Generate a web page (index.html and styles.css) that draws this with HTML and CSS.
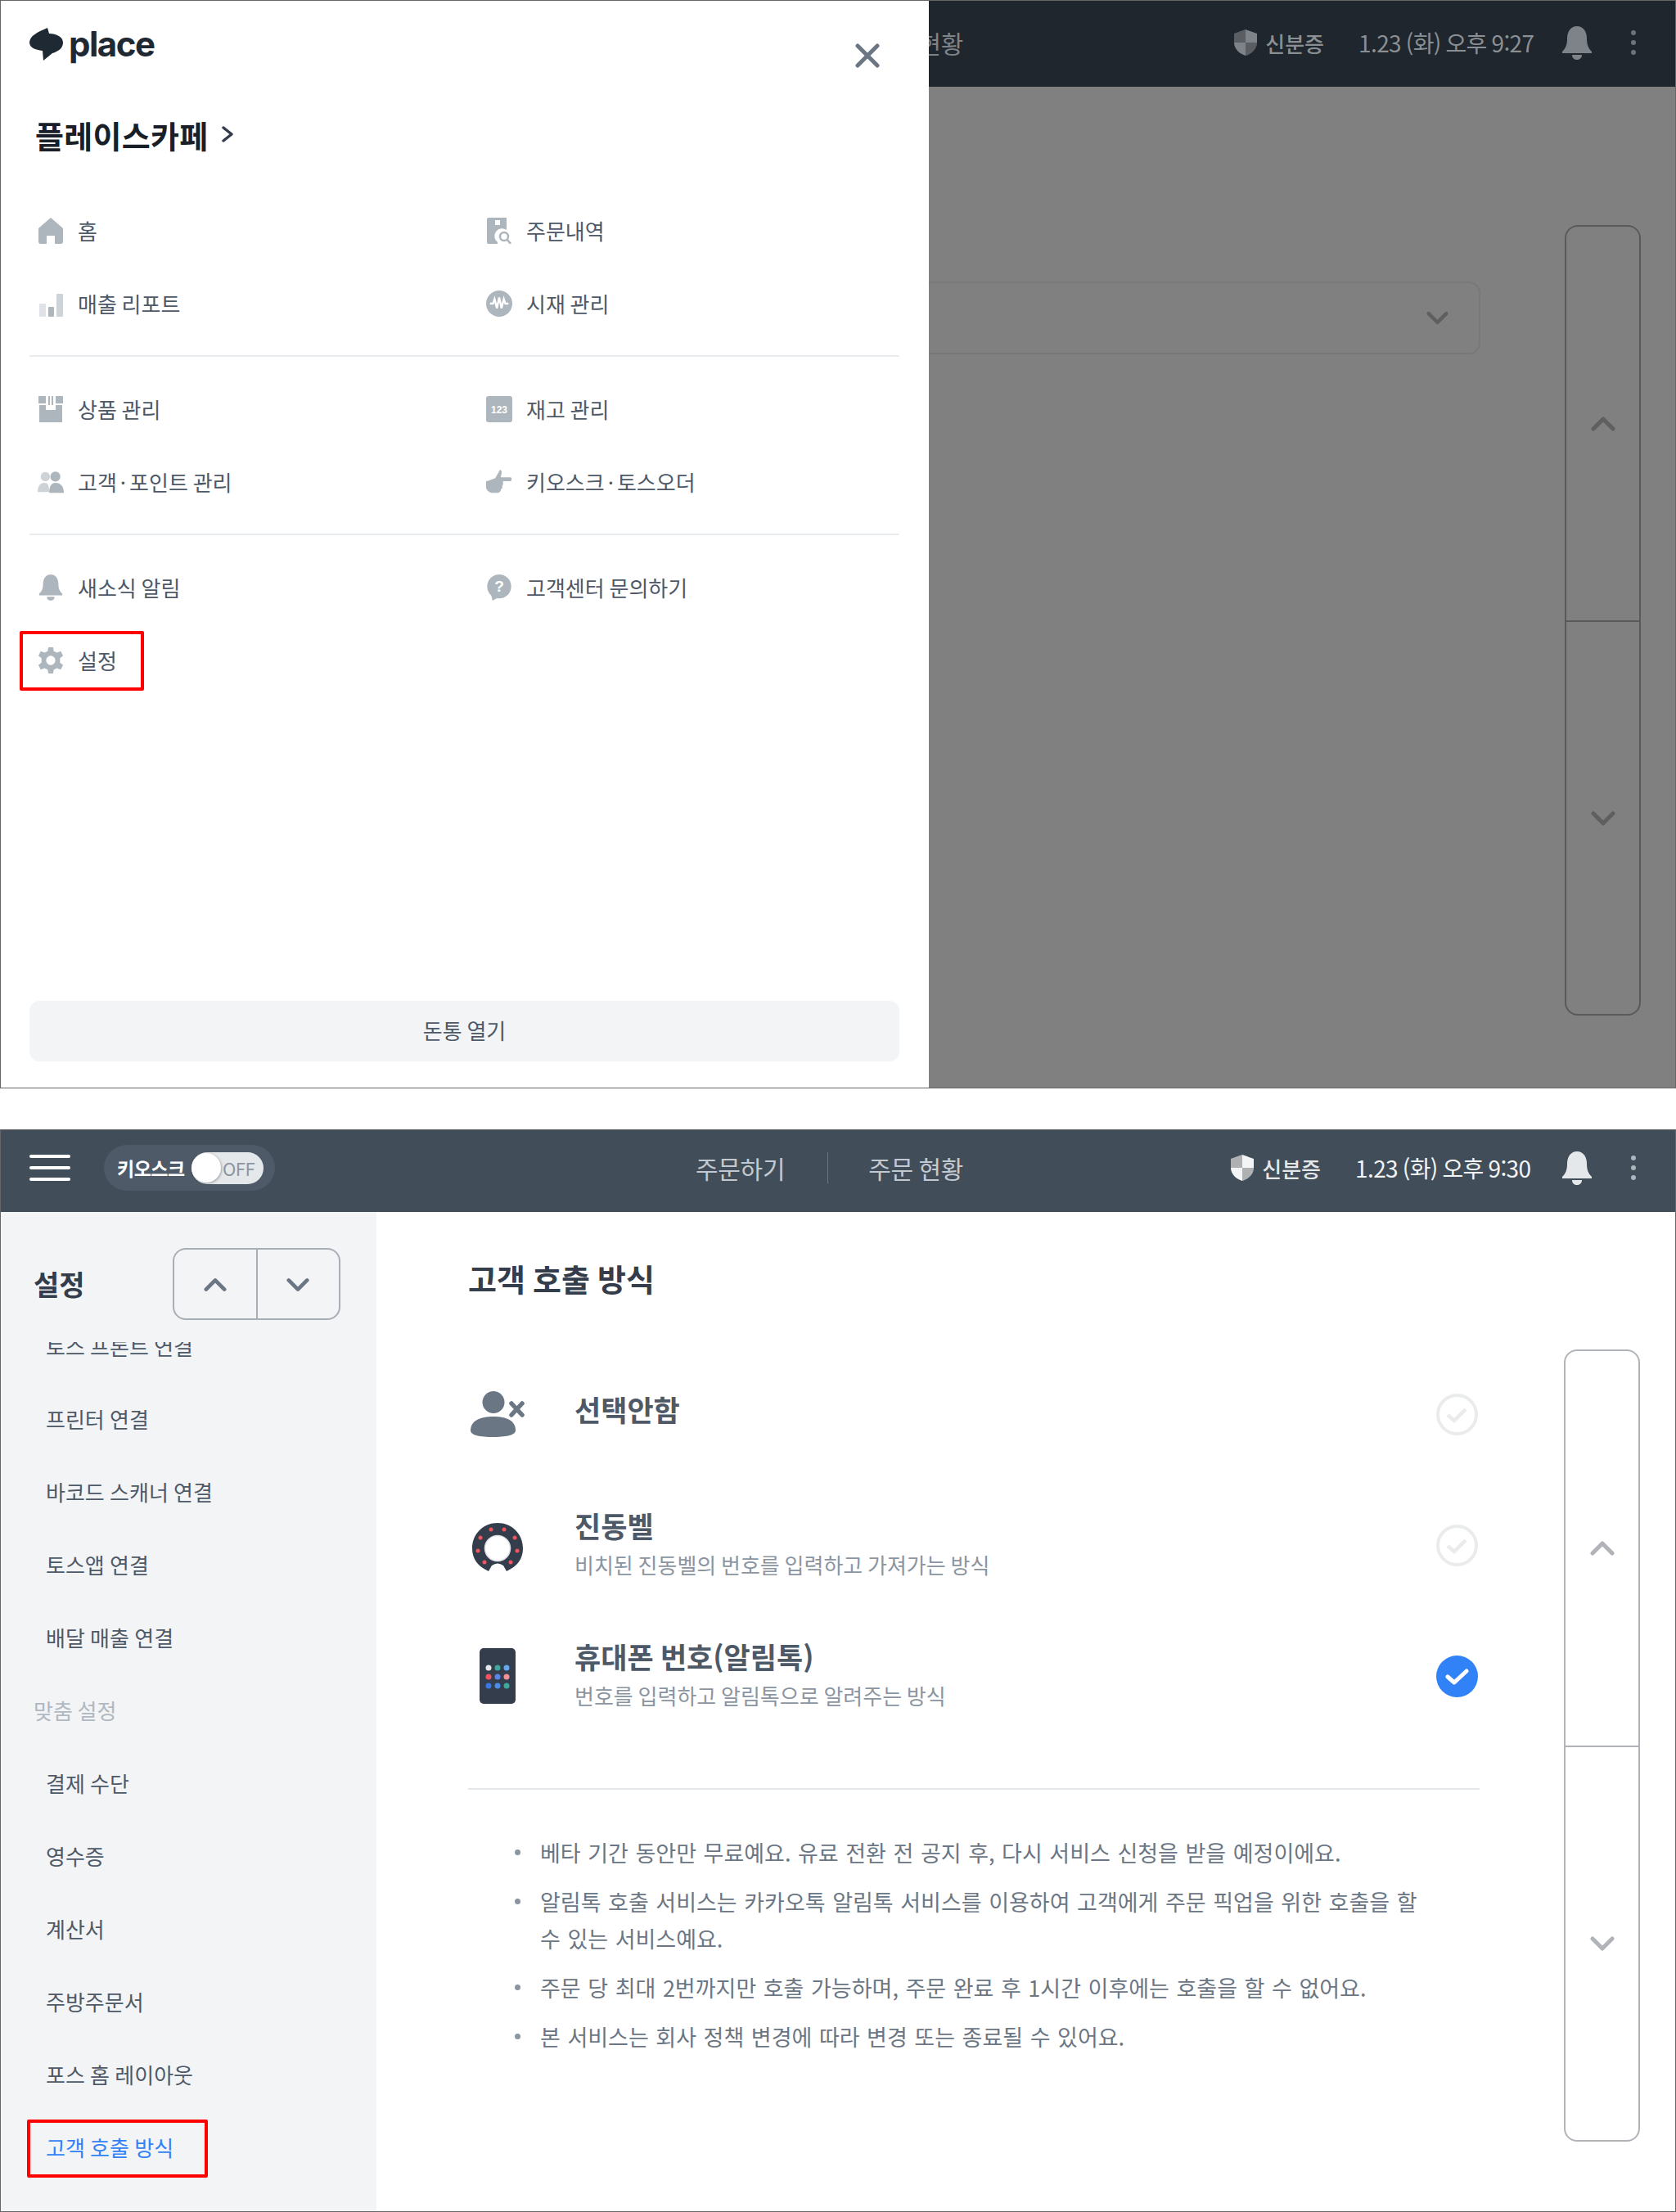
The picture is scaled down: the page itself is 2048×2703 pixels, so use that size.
FILE: index.html
```html
<!DOCTYPE html>
<html lang="ko">
<head>
    <meta charset="UTF-8">
    <meta name="viewport" content="width=device-width, initial-scale=1.0">
    <title>고객 호출 방식</title>
    <link rel="stylesheet" href="styles.css">
</head>
<body>
    <svg class="sprite" width="0" height="0">
        <symbol id="shield" viewBox="0 0 28 32"><path d="M14 0 L28 5 V16 C28 24 21 30 14 32 C7 30 0 24 0 16 V5 Z" fill="currentColor"/><path d="M14 0 V16 H0 V5 Z M14 16 H28 C28 24 21 30 14 32 Z" fill="#000" opacity=".28"/></symbol>
        <symbol id="bell" viewBox="0 0 36 41"><path d="M18 0 C26 0 30 7 30 15 C30 23 32 27 36 31 V33 H0 V31 C4 27 6 23 6 15 C6 7 10 0 18 0 Z M12 35 H24 C24 39 21 41 18 41 C15 41 12 39 12 35 Z" fill="currentColor"/></symbol>
        <symbol id="chev-up" viewBox="0 0 30 18"><path d="M3 15 L15 3 L27 15" fill="none" stroke="currentColor" stroke-width="5" stroke-linecap="round" stroke-linejoin="round"/></symbol>
        <symbol id="chev-down" viewBox="0 0 30 18"><path d="M3 3 L15 15 L27 3" fill="none" stroke="currentColor" stroke-width="5" stroke-linecap="round" stroke-linejoin="round"/></symbol>
    </svg>

    <section class="shot shot-dim">
        <header class="topbar">
            <div class="topbar-nav">
                <span class="nav-link">주문하기</span>
                <span class="nav-line"></span>
                <span class="nav-link">주문 현황</span>
            </div>
            <div class="topbar-right">
                <svg class="shield"><use href="#shield"/></svg>
                <span class="id-label">신분증</span>
                <span class="clock">1.23 (화) 오후 9:27</span>
                <svg class="bell"><use href="#bell"/></svg>
                <span class="dots"><i></i><i></i><i></i></span>
            </div>
        </header>
        <div class="dim-body">
            <div class="dim-select">
                <svg class="dim-chev"><use href="#chev-down"/></svg>
            </div>
            <div class="scroll-box">
                <div class="scroll-half"><svg class="scroll-chev"><use href="#chev-up"/></svg></div>
                <div class="scroll-half"><svg class="scroll-chev"><use href="#chev-down"/></svg></div>
            </div>
        </div>

        <aside class="drawer">
            <div class="drawer-head">
                <div class="logo">
                    <svg class="logo-mark" viewBox="0 0 42 40"><path d="M22 0 L24 7 C33 7 41 11 41 18 C41 25 35 29 28 31 L17 40 L16 28 C7 27 0 24 0 18 C0 10 10 5 22 0 Z" fill="#1f2933"/></svg>
                    <span class="logo-text">place</span>
                </div>
                <svg class="close" viewBox="0 0 30 30"><path d="M3 3 L27 27 M27 3 L3 27" stroke="#6b7684" stroke-width="5" stroke-linecap="round"/></svg>
            </div>
            <div class="store">플레이스카페
                <svg class="store-chev" viewBox="0 0 14 20"><path d="M2 2 L12 10 L2 18" fill="none" stroke="#333d4b" stroke-width="3.500" stroke-linecap="round" stroke-linejoin="round"/></svg>
            </div>

            <div class="menu-group">
                <div class="menu-item">
                    <svg class="menu-icon" viewBox="0 0 32 32"><path d="M16 0 L31 13 V29 Q31 32 28 32 H21 V22 H11 V32 H4 Q1 32 1 29 V13 Z"/></svg>
                    <span>홈</span>
                </div>
                <div class="menu-item">
                    <svg class="menu-icon" viewBox="0 0 32 32"><path d="M3 0 H25 V15 A9 9 0 0 0 14 30 V32 H3 Q1 32 1 30 V2 Q1 0 3 0 Z M11 3 V9 H17 V3 Z" fill-rule="evenodd"/><circle cx="22" cy="23" r="5" fill="none" stroke="#adb5bd" stroke-width="2.5"/><path d="M26 27 L30 32" stroke="#adb5bd" stroke-width="2.5"/></svg>
                    <span>주문내역</span>
                </div>
                <div class="menu-item">
                    <svg class="menu-icon" viewBox="0 0 32 32"><rect x="2" y="16" width="8" height="16" rx="1" fill="#dfe3e7"/><rect x="13" y="20" width="7" height="12" rx="1"/><rect x="23" y="4" width="8" height="28" rx="1" fill="#ced3d8"/></svg>
                    <span>매출 리포트</span>
                </div>
                <div class="menu-item">
                    <svg class="menu-icon" viewBox="0 0 34 34"><circle cx="17" cy="17" r="17"/><path d="M5 17 H9 L11 11 L14 23 L17 9 L20 23 L23 11 L25 17 H29" fill="none" stroke="#fff" stroke-width="2.5"/></svg>
                    <span>시재 관리</span>
                </div>
            </div>

            <div class="menu-group">
                <div class="menu-item">
                    <svg class="menu-icon" viewBox="0 0 32 32"><path d="M1 0 H10 V9 H1 Z M13 0 H15 V11 H13 Z M17 0 H19 V11 H17 Z M22 0 H31 V9 H22 Z" /><path d="M2 11 H10 V17 H22 V11 H30 V32 H2 Z"/></svg>
                    <span>상품 관리</span>
                </div>
                <div class="menu-item">
                    <svg class="menu-icon" viewBox="0 0 32 32"><rect width="32" height="32" rx="3"/><text class="icon-num" x="16" y="20.5" text-anchor="middle">123</text></svg>
                    <span>재고 관리</span>
                </div>
                <div class="menu-item">
                    <svg class="menu-icon" viewBox="0 0 34 28"><circle cx="10" cy="7" r="6" fill="#ced3d8"/><path d="M0 27 C0 18 4 15 9 15 C13 15 15 18 15 27 Z" fill="#ced3d8"/><circle cx="23" cy="7" r="6.5"/><path d="M15 28 C15 19 18 15 23 15 C30 15 34 20 34 28 Z"/></svg>
                    <span>고객<span class="mid-dot">·</span>포인트 관리</span>
                </div>
                <div class="menu-item">
                    <svg class="menu-icon" viewBox="0 0 34 32"><path d="M12 11 L18 0 Q21 1 20 5 L19 10 H32 Q34 11 33 13 Q33 15 31 15 H22 V18 Q22 20 21 21 V24 Q19 25 19 27 Q18 30 15 30 H7 Q2 29 0 24 V15 Q5 14 12 11 Z"/></svg>
                    <span>키오스크<span class="mid-dot">·</span>토스오더</span>
                </div>
            </div>

            <div class="menu-group menu-group-last">
                <div class="menu-item">
                    <svg class="menu-icon" viewBox="0 0 30 34"><path d="M15 0 C22 0 25 6 25 13 C25 19 27 22 30 25 V27 H0 V25 C3 22 5 19 5 13 C5 6 8 0 15 0 Z"/><path d="M10 29 H20 C20 32 18 34 15 34 C12 34 10 32 10 29 Z"/></svg>
                    <span>새소식 알림</span>
                </div>
                <div class="menu-item">
                    <svg class="menu-icon" viewBox="0 0 34 35"><circle cx="17" cy="16" r="16"/><path d="M6 26 L8 35 L17 30 Z"/><text class="icon-q" x="17" y="23" text-anchor="middle">?</text></svg>
                    <span>고객센터 문의하기</span>
                </div>
                <div class="menu-item menu-item-marked">
                    <svg class="menu-icon" viewBox="0 0 32 34"><path d="M13 0 H19 L20 5 L24 7 L29 5 L32 11 L28 14 V20 L32 23 L29 29 L24 27 L20 29 L19 34 H13 L12 29 L8 27 L3 29 L0 23 L4 20 V14 L0 11 L3 5 L8 7 L12 5 Z M16 11 A6 6 0 1 0 16 23 A6 6 0 1 0 16 11 Z" fill-rule="evenodd"/></svg>
                    <span>설정</span>
                    <span class="red-box red-box-menu"></span>
                </div>
            </div>

            <div class="drawer-button">돈통 열기</div>
        </aside>
    </section>

    <section class="shot shot-main">
        <header class="topbar">
            <div class="burger"><i></i><i></i><i></i></div>
            <div class="kiosk">
                <span class="kiosk-label">키오스크</span>
                <span class="toggle"><span class="toggle-knob"></span><span class="toggle-off">OFF</span></span>
            </div>
            <div class="topbar-nav">
                <span class="nav-link">주문하기</span>
                <span class="nav-line"></span>
                <span class="nav-link">주문 현황</span>
            </div>
            <div class="topbar-right">
                <svg class="shield"><use href="#shield"/></svg>
                <span class="id-label">신분증</span>
                <span class="clock">1.23 (화) 오후 9:30</span>
                <svg class="bell"><use href="#bell"/></svg>
                <span class="dots"><i></i><i></i><i></i></span>
            </div>
        </header>

        <div class="page">
            <nav class="sidebar">
                <div class="sidebar-head">
                    <h2 class="sidebar-title">설정</h2>
                    <div class="updown">
                        <span class="updown-btn"><svg class="updown-chev"><use href="#chev-up"/></svg></span>
                        <span class="updown-btn"><svg class="updown-chev"><use href="#chev-down"/></svg></span>
                    </div>
                </div>
                <div class="side-list">
                    <div class="side-item side-item-cut">토스 프론트 연결</div>
                    <div class="side-item">프린터 연결</div>
                    <div class="side-item">바코드 스캐너 연결</div>
                    <div class="side-item">토스앱 연결</div>
                    <div class="side-item">배달 매출 연결</div>
                    <div class="side-section">맞춤 설정</div>
                    <div class="side-item">결제 수단</div>
                    <div class="side-item">영수증</div>
                    <div class="side-item">계산서</div>
                    <div class="side-item">주방주문서</div>
                    <div class="side-item">포스 홈 레이아웃</div>
                    <div class="side-item side-item-active">고객 호출 방식<span class="red-box red-box-side"></span></div>
                </div>
            </nav>

            <main class="content">
                <h1 class="content-title">고객 호출 방식</h1>

                <div class="option">
                    <div class="option-icon">
                        <svg width="66" height="56" viewBox="0 0 66 56"><circle cx="28" cy="13.500" r="13.500" fill="#6b7684"/><path d="M0 48 C0 36 12 31 28 31 C44 31 55 36 55 48 C55 54 42 56 27 56 C12 56 0 54 0 48 Z" fill="#6b7684"/><path d="M50 15 L63 29 M63 15 L50 29" stroke="#6b7684" stroke-width="5.500" stroke-linecap="round"/></svg>
                    </div>
                    <div class="option-text option-text-solo"><div class="option-name">선택안함</div></div>
                    <svg class="radio" viewBox="0 0 51 51"><circle cx="25.500" cy="25.500" r="23.500" fill="none" stroke="#e9ebed" stroke-width="4"/><path d="M14 26 L22 33 L36 19" fill="none" stroke="#e9ebed" stroke-width="4.500"/></svg>
                </div>
                <div class="option">
                    <div class="option-icon">
                        <svg class="bell-pager" width="62" height="60" viewBox="0 0 62 60">
                            <path d="M31 0 C48 0 62 13 62 31 C62 44 55 53 42 59 L38 52 Q31 47 24 52 L20 59 C7 53 0 44 0 31 C0 13 14 0 31 0 Z" fill="#333d4b"/>
                            <circle cx="31" cy="31" r="15.500" fill="#fff" stroke="#dfe2e6" stroke-width="1.500"/>
                            <g fill="#f0545f"><circle cx="23" cy="8" r="2.500"/><circle cx="39" cy="8" r="2.500"/><circle cx="10" cy="18" r="2.500"/><circle cx="52" cy="18" r="2.500"/><circle cx="7" cy="34" r="2.500"/><circle cx="55" cy="34" r="2.500"/><circle cx="15" cy="48" r="2.500"/><circle cx="47" cy="48" r="2.500"/></g>
                        </svg>
                    </div>
                    <div class="option-text">
                        <div class="option-name">진동벨</div>
                        <div class="option-sub">비치된 진동벨의 번호를 입력하고 가져가는 방식</div>
                    </div>
                    <svg class="radio" viewBox="0 0 51 51"><circle cx="25.500" cy="25.500" r="23.500" fill="none" stroke="#e9ebed" stroke-width="4"/><path d="M14 26 L22 33 L36 19" fill="none" stroke="#e9ebed" stroke-width="4.500"/></svg>
                </div>
                <div class="option">
                    <div class="option-icon">
                        <svg width="44" height="68" viewBox="0 0 44 68">
                            <rect width="44" height="68" rx="5" fill="#333d4b"/>
                            <circle cx="11" cy="24" r="3.500" fill="#e5e8eb"/><circle cx="22" cy="24" r="3.500" fill="#3fa89b"/><circle cx="33" cy="24" r="3.500" fill="#64a8f0"/>
                            <circle cx="11" cy="35" r="3.500" fill="#f0545f"/><circle cx="22" cy="35" r="3.500" fill="#5b86e8"/><circle cx="33" cy="35" r="3.500" fill="#f29199"/>
                            <circle cx="11" cy="46" r="3.500" fill="#3b78e7"/><circle cx="22" cy="46" r="3.500" fill="#4a8de8"/><circle cx="33" cy="46" r="3.500" fill="#3fa89b"/>
                        </svg>
                    </div>
                    <div class="option-text">
                        <div class="option-name">휴대폰 번호(알림톡)</div>
                        <div class="option-sub">번호를 입력하고 알림톡으로 알려주는 방식</div>
                    </div>
                    <svg class="radio" viewBox="0 0 51 51"><circle cx="25.500" cy="25.500" r="25.500" fill="#3182f6"/><path d="M14 26 L22 33 L37 19" fill="none" stroke="#fff" stroke-width="5" stroke-linecap="round" stroke-linejoin="round"/></svg>
                </div>

                <ul class="notes">
                    <li>베타 기간 동안만 무료예요. 유료 전환 전 공지 후, 다시 서비스 신청을 받을 예정이에요.</li>
                    <li>알림톡 호출 서비스는 카카오톡 알림톡 서비스를 이용하여 고객에게 주문 픽업을 위한 호출을 할 수 있는 서비스예요.</li>
                    <li>주문 당 최대 2번까지만 호출 가능하며, 주문 완료 후 1시간 이후에는 호출을 할 수 없어요.</li>
                    <li>본 서비스는 회사 정책 변경에 따라 변경 또는 종료될 수 있어요.</li>
                </ul>
            </main>

            <div class="scroll-box">
                <div class="scroll-half"><svg class="scroll-chev"><use href="#chev-up"/></svg></div>
                <div class="scroll-half"><svg class="scroll-chev"><use href="#chev-down"/></svg></div>
            </div>
        </div>
    </section>
</body>
</html>
```

FILE: styles.css
```css
* { box-sizing: border-box; }
body { margin: 0; background: #fff; font-family: "Noto Sans CJK KR", "Noto Sans", sans-serif; color: #4e5968; word-spacing: -1.5px; }
h1, h2, ul { margin: 0; padding: 0; }
.sprite { position: absolute; }

/* two screenshots */
.shot { position: relative; width: 2048px; overflow: hidden; border: 1px solid #666; }
.shot-dim { height: 1330px; background: #808080; }
.shot-main { height: 1323px; margin-top: 50px; background: #fff; }

/* top bar */
.topbar { display: flex; align-items: center; height: 100px; padding-bottom: 8px; background: #414e59; }
.shot-dim .topbar { height: 105px; padding: 0 0 3px 849px; background: #1f262d; }
.burger { display: flex; flex-direction: column; gap: 10px; width: 50px; margin-left: 35px; }
.burger i { display: block; height: 4px; border-radius: 2px; background: #fff; }
.kiosk { display: flex; align-items: center; width: 209px; height: 56px; margin-left: 41px; padding-left: 16px; border-radius: 28px; background: #4e5a67; }
.kiosk-label { width: 91px; font-size: 23px; font-weight: 700; color: #fff; white-space: nowrap; letter-spacing: -0.5px; }
.toggle { display: flex; align-items: center; width: 88px; height: 39px; border-radius: 20px; background: #e5e8eb; }
.toggle-knob { width: 36px; height: 36px; border-radius: 50%; background: #fff; box-shadow: 1px 1px 3px rgba(0, 0, 0, 0.3); }
.toggle-off { margin-left: 2px; font-size: 22px; color: #8b95a1; letter-spacing: -0.5px; }
.topbar-nav { display: flex; align-items: center; margin-left: 514px; }
.shot-dim .topbar-nav { margin-left: 0; }
.nav-link { font-size: 30px; line-height: 40px; color: #c3c9d0; white-space: nowrap; letter-spacing: -0.3px; }
.shot-dim .nav-link { color: #7d8388; }
.nav-line { width: 1px; height: 38px; margin: 0 49px 0 52px; background: #6b7684; }
.topbar-right { display: flex; align-items: center; margin-left: auto; padding-right: 48px; color: #fff; }
.shield { width: 28px; height: 32px; color: #f2f4f6; }
.id-label { margin-left: 10px; font-size: 26px; font-weight: 500; color: #e5e8eb; }
.clock { width: 216px; margin-left: 42px; font-size: 28px; white-space: nowrap; letter-spacing: -0.6px; color: #f2f4f6; }
.shot-dim .clock { width: 212px; }
.bell { width: 36px; height: 41px; margin-left: 37px; color: #e5e8eb; }
.dots { display: flex; flex-direction: column; gap: 6px; margin-left: 48px; }
.dots i { display: block; width: 6px; height: 6px; border-radius: 50%; background: #adb5bd; }
.shot-dim .shield, .shot-dim .bell { color: #7d8388; }
.shot-dim .id-label, .shot-dim .clock { color: #8a8f94; }
.shot-dim .dots i { background: #6f7377; }

/* dimmed page behind the drawer */
.dim-body { display: flex; align-items: flex-start; justify-content: flex-end; gap: 103px; padding-right: 42px; }
.dim-select { display: flex; align-items: center; justify-content: flex-end; width: 800px; height: 89px; margin-top: 238px; padding-right: 37px; border: 2px solid #787878; border-radius: 14px; }
.dim-chev { width: 27px; height: 17px; color: #5f5f5f; }
.shot-dim .scroll-box { height: 966px; margin-top: 169px; border-color: #5a5a5a; }
.shot-dim .scroll-half + .scroll-half { border-color: #5a5a5a; }
.shot-dim .scroll-chev { color: #5f5f5f; }

/* drawer */
.drawer { position: absolute; top: 0; bottom: 0; left: 0; display: flex; flex-direction: column; width: 1134px; padding: 0 36px 32px 35px; background: #fff; }
.drawer-head { display: flex; align-items: flex-start; justify-content: space-between; padding-top: 33px; }
.logo { display: flex; align-items: center; gap: 6px; }
.logo-mark { width: 42px; height: 40px; }
.logo-text { font-family: Inter, sans-serif; font-size: 42px; font-weight: 700; line-height: 40px; letter-spacing: -1.5px; color: #1f2933; }
.close { width: 30px; height: 30px; margin: 19px 24px 0 0; }
.store { display: flex; align-items: center; gap: 16px; height: 50px; margin: 56px 0 0 7px; font-size: 38px; font-weight: 700; letter-spacing: 0.3px; color: #191f28; }
.store-chev { width: 14px; height: 20px; }
.menu-group { display: grid; grid-template-columns: 548px 1fr; padding: 19px 0; border-bottom: 2px solid #e9ecef; }
.store + .menu-group { margin-top: 29px; }
.menu-group-last { border-bottom: 0; }
.menu-item { position: relative; display: flex; align-items: center; gap: 17px; height: 89px; padding-left: 10px; font-size: 26px; color: #4e5968; }
.mid-dot { margin: 0 4px; }
.menu-icon { flex: none; width: 32px; height: 32px; fill: #adb5bd; }
.icon-num { font-family: "Liberation Sans", sans-serif; font-size: 12px; font-weight: 700; fill: #fff; }
.icon-q { font-family: "Liberation Sans", sans-serif; font-size: 21px; font-weight: 700; fill: #fff; }
.drawer-button { display: flex; align-items: center; justify-content: center; height: 74px; margin-top: auto; padding-bottom: 3px; border-radius: 12px; background: #f2f4f6; font-size: 26px; color: #4e5968; }

/* red annotation boxes */
.red-box { position: absolute; border: 4px solid #f00; border-radius: 2px; }
.red-box-menu { top: 9px; left: -12px; width: 152px; height: 73px; }
.red-box-side { top: 11px; left: 32px; width: 221px; height: 71px; }

/* settings page */
.page { display: flex; height: 1221px; }
.sidebar { display: flex; flex-direction: column; flex: none; width: 459px; background: #f2f4f6; }
.sidebar-head { display: flex; align-items: flex-start; justify-content: space-between; height: 159px; padding: 44px 44px 0 40px; }
.sidebar-title { margin-top: 18px; font-size: 34px; font-weight: 700; line-height: 52px; color: #333d4b; }
.updown { display: flex; width: 205px; height: 88px; border: 2px solid #a8aeb5; border-radius: 16px; }
.updown-btn { display: flex; flex: 1; align-items: center; justify-content: center; padding-top: 2px; }
.updown-btn + .updown-btn { border-left: 2px solid #a8aeb5; }
.updown-chev { width: 28px; height: 18px; color: #6b7684; }
.side-list { flex: 1; overflow: hidden; }
.side-item { position: relative; height: 89px; padding-left: 55px; font-size: 26px; line-height: 89px; word-spacing: -1px; color: #4e5968; }
.side-item-cut { margin-top: -40px; }
.side-item-active { color: #3182f6; }
.side-section { height: 89px; padding-left: 40px; font-size: 26px; line-height: 89px; color: #b0b8c1; }

.content { flex: none; width: 1236px; margin-left: 112px; padding-top: 56px; }
.content-title { height: 50px; margin-bottom: 61px; font-size: 38px; font-weight: 700; line-height: 50px; color: #333d4b; }
.option { display: flex; align-items: center; height: 160px; }
.option-icon { display: flex; flex: none; align-items: center; justify-content: center; width: 72px; margin-right: 58px; }
.bell-pager { margin-top: 5px; }
.option-text-solo { margin-bottom: 12px; }
.option-name { font-size: 35px; font-weight: 700; line-height: 48px; color: #4e5968; }
.option-sub { font-size: 26px; line-height: 48px; color: #8b95a1; }
.radio { flex: none; width: 51px; height: 51px; margin: 0 2px 0 auto; }
.notes { margin-top: 57px; padding-top: 54px; border-top: 2px solid #e5e8eb; list-style: none; font-size: 27px; line-height: 45px; word-spacing: 1px; color: #6b7684; }
.notes li { display: flex; padding: 0 63px 15px 57px; }
.notes li::before { content: ""; flex: none; width: 7px; height: 7px; margin: 19px 24px 0 0; border-radius: 50%; background: #8b95a1; }

.scroll-box { flex: none; width: 93px; height: 968px; margin: 168px 0 0 103px; border: 2px solid #b0b4b9; border-radius: 16px; }
.dim-body .scroll-box { margin-left: 0; }
.scroll-half { display: flex; align-items: center; justify-content: center; height: 50%; }
.scroll-half + .scroll-half { border-top: 2px solid #b0b4b9; }
.scroll-chev { width: 30px; height: 18px; color: #b0b4b9; }
```
